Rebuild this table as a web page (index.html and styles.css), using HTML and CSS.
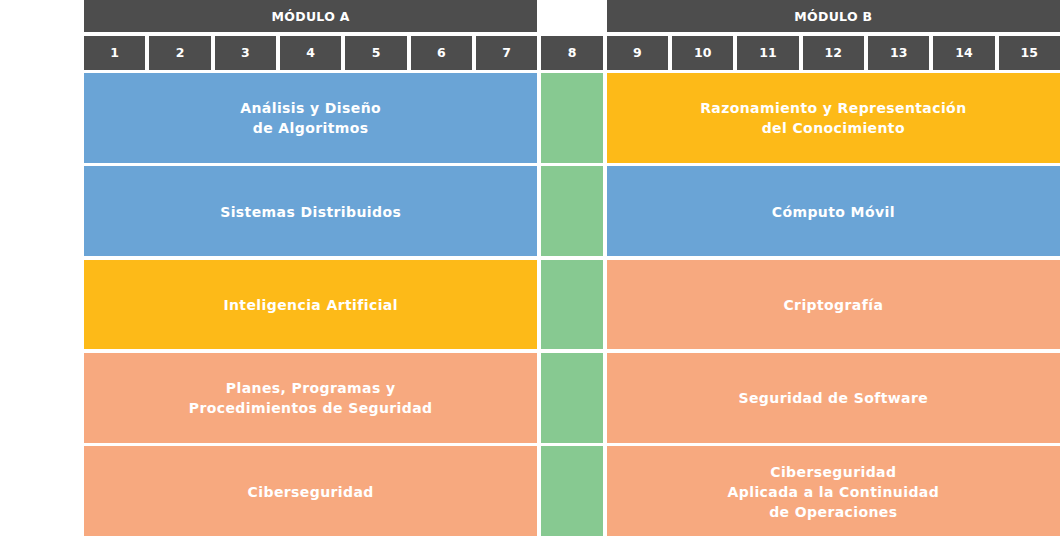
FILE: index.html
```html
<!DOCTYPE html>
<html lang="es">
<head>
<meta charset="utf-8">
<title>Plan de estudios</title>
<link rel="stylesheet" href="styles.css">
</head>
<body>
<div class="plan">
  <div class="mod mod-a">MÓDULO A</div>
  <div class="spacer"></div>
  <div class="mod mod-b">MÓDULO B</div>

  <div class="num">1</div>
  <div class="num">2</div>
  <div class="num">3</div>
  <div class="num">4</div>
  <div class="num">5</div>
  <div class="num">6</div>
  <div class="num">7</div>
  <div class="num">8</div>
  <div class="num">9</div>
  <div class="num">10</div>
  <div class="num">11</div>
  <div class="num">12</div>
  <div class="num">13</div>
  <div class="num">14</div>
  <div class="num">15</div>

  <div class="course blue wide">Análisis y Diseño<br>de Algoritmos</div>
  <div class="green"></div>
  <div class="course yellow wide">Razonamiento y Representación<br>del Conocimiento</div>

  <div class="course blue wide">Sistemas Distribuidos</div>
  <div class="green"></div>
  <div class="course blue wide">Cómputo Móvil</div>

  <div class="course yellow wide">Inteligencia Artificial</div>
  <div class="green"></div>
  <div class="course salmon wide">Criptografía</div>

  <div class="course salmon wide">Planes, Programas y<br>Procedimientos de Seguridad</div>
  <div class="green"></div>
  <div class="course salmon wide">Seguridad de Software</div>

  <div class="course salmon wide">Ciberseguridad</div>
  <div class="green"></div>
  <div class="course salmon wide">Ciberseguridad<br>Aplicada a la Continuidad<br>de Operaciones</div>
</div>
</body>
</html>
```

FILE: styles.css
```css
html, body {
  margin: 0;
  padding: 0;
  background: #ffffff;
}

body {
  font-family: "DejaVu Sans", "Liberation Sans", sans-serif;
  font-weight: 700;
  color: #ffffff;
}

.plan {
  box-sizing: border-box;
  width: 1060px;
  height: 536px;
  padding-left: 84px;
  display: grid;
  grid-template-columns: repeat(15, 1fr);
  grid-template-rows: 32px 34px repeat(5, 1fr);
  column-gap: 4px;
  row-gap: 3.5px;
}

.mod {
  grid-column: span 7;
  background: #4d4d4d;
  display: flex;
  align-items: center;
  justify-content: center;
  font-size: 12.5px;
  letter-spacing: 0.3px;
}

.spacer {
  background: transparent;
}

.num {
  background: #4d4d4d;
  display: flex;
  align-items: center;
  justify-content: center;
  font-size: 12.5px;
}

.course {
  display: flex;
  align-items: center;
  justify-content: center;
  text-align: center;
  font-size: 14px;
  line-height: 20px;
  letter-spacing: 0.4px;
  padding-top: 1px;
}

.wide {
  grid-column: span 7;
}

.blue { background: #6aa4d6; }
.yellow { background: #fdba18; }
.salmon { background: #f7a97f; }
.green { background: #87c991; }
```
